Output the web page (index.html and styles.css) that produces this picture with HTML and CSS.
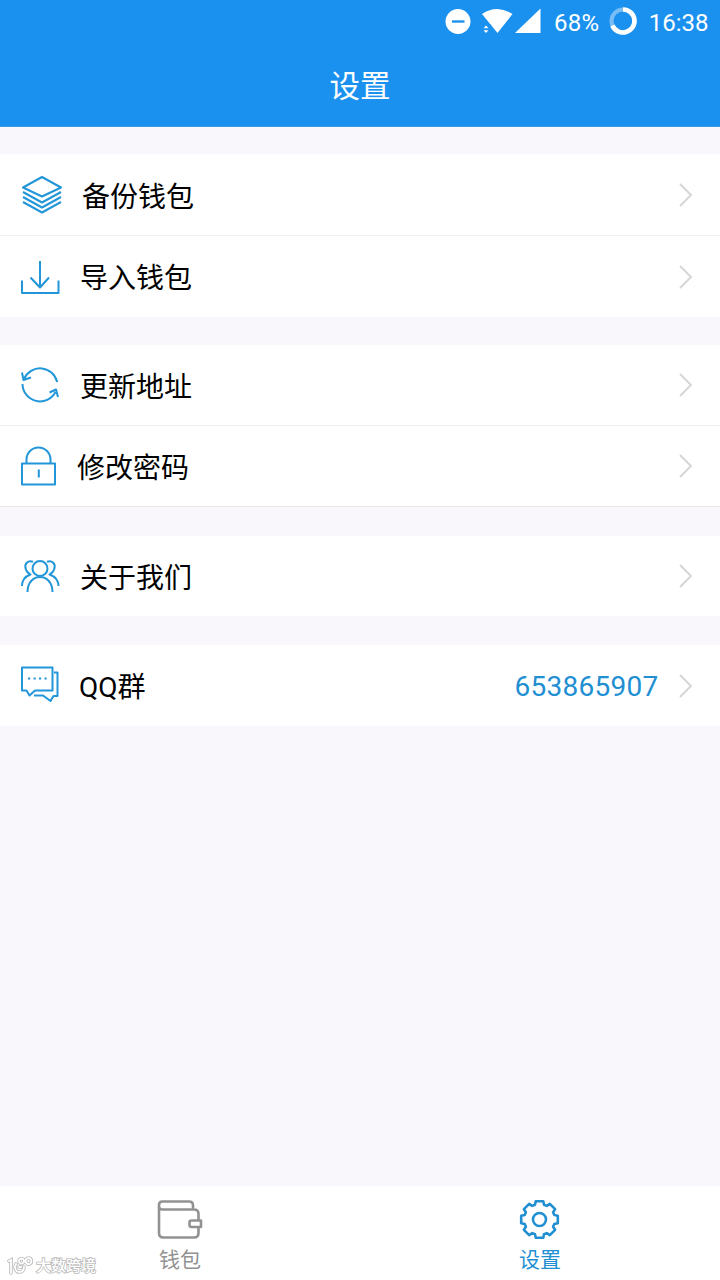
FILE: index.html
```html
<!DOCTYPE html>
<html lang="zh-CN">
<head>
<meta charset="utf-8">
<title>设置</title>
<link rel="stylesheet" href="styles.css">
</head>
<body>
<div class="screen">
  <header class="header">
    <div class="status">
      <svg class="status-icons" viewBox="440 4 104 36" width="104" height="36">
        <circle cx="457" cy="21.500" r="12.500" fill="#fff"/>
        <path d="M451 21.500H463.500" stroke="#1b91ef" stroke-width="2.400"/>
        <path d="M481 14Q496 4 511.500 14L496.500 33Z" fill="#fff"/>
        <path d="M481 24H489.500V34H481Z" fill="#1b91ef"/>
        <path d="M482.500 28.300L485 25.500L487.500 28.300ZM482.500 30.300H487.500L485 33Z" fill="#fff"/>
        <path d="M514 33L539.500 8.500V33Z" fill="#fff"/>
      </svg>
      <span class="battery">68%</span>
      <svg class="ring" viewBox="0 0 30 30" width="30" height="30">
        <circle cx="15" cy="15" r="11.500" fill="none" stroke="#79bdf6" stroke-width="4"/>
        <path d="M15 3.500A11.500 11.500 0 1 1 4.400 19.500" fill="none" stroke="#fff" stroke-width="4.600"/>
      </svg>
      <span class="clock">16:38</span>
    </div>
    <h1 class="title">设置</h1>
  </header>

  <main class="content">
    <section class="group group-backup">
      <div class="row">
        <svg class="icon" viewBox="16 171 48 48"><path d="M23 187.500L42 177L61 187.500L42 196.500ZM23 192L42 202.500L61 192M23 197L42 207.500L61 197M23 202L42 212.500L61 202"/></svg>
        <span class="label label-far">备份钱包</span>
        <svg class="chevron" viewBox="0 0 16 28"><path d="M2 3L13 14L2 25"/></svg>
      </div>
      <div class="row">
        <svg class="icon" viewBox="16 252 48 48"><path d="M22 279.500V292H58.500V279.500M40 260V286M30.500 276.500L40 286.500L49 276.500"/></svg>
        <span class="label">导入钱包</span>
        <svg class="chevron" viewBox="0 0 16 28"><path d="M2 3L13 14L2 25"/></svg>
      </div>
    </section>

    <section class="group group-security">
      <div class="row">
        <svg class="icon" viewBox="16 361 48 48"><path d="M57.200 382A17.500 17.500 0 0 0 24 379M22 372.500L23.500 380L31 377.500M22.500 384A17.500 17.500 0 0 0 55.500 392M49.500 392.500L56 389.500L58 397"/></svg>
        <span class="label">更新地址</span>
        <svg class="chevron" viewBox="0 0 16 28"><path d="M2 3L13 14L2 25"/></svg>
      </div>
      <div class="row">
        <svg class="icon" viewBox="16 442 48 48"><path d="M22 463.500H55V484.500H22ZM26.500 463.500V459.500A12 12 0 0 1 50.500 459.500V463.500M38.800 469.500V477.500"/></svg>
        <span class="label label-near">修改密码</span>
        <svg class="chevron" viewBox="0 0 16 28"><path d="M2 3L13 14L2 25"/></svg>
      </div>
    </section>

    <section class="group group-about">
      <div class="row">
        <svg class="icon" viewBox="16 552 48 48"><circle cx="40" cy="568.500" r="7.500"/><path d="M27.500 592C27.500 572 52.500 572 52.500 592M33 561.800C27.500 560 24.500 564 25.500 568C26 571 28 573 30.500 574.500C25 576.500 22 580 22 586M47 561.800C52.500 560 55.500 564 54.500 568C54 571 52 573 49.500 574.500C55 576.500 58.500 580 58.500 586"/></svg>
        <span class="label">关于我们</span>
        <svg class="chevron" viewBox="0 0 16 28"><path d="M2 3L13 14L2 25"/></svg>
      </div>
    </section>

    <section class="group group-contact">
      <div class="row">
        <svg class="icon" viewBox="16 662 48 48"><path d="M22 667.500H52.500V690.500H35L29.500 695.500L26.500 690.500H22ZM54 672.500H57.500V696H53.500L50.500 701L43 695.500H34"/><path d="M28 678.500H47" stroke-dasharray="2.200 3.300"/></svg>
        <span class="label label-qq">QQ群</span>
        <span class="value">653865907</span>
        <svg class="chevron" viewBox="0 0 16 28"><path d="M2 3L13 14L2 25"/></svg>
      </div>
    </section>
  </main>

  <nav class="tabs">
    <div class="tab">
      <svg class="tab-icon" viewBox="156 1196 48 46"><path d="M159 1209V1205Q159 1201.500 162.500 1201.500H189Q193 1201.500 193 1205.500V1209M159 1206.500Q159 1209.500 162.500 1209.500H194Q198.500 1209.500 198.500 1214V1219.500M198.500 1227.500V1233Q198.500 1237.500 194 1237.500H163.500Q159 1237.500 159 1233V1206M191.500 1220.500H201V1227H191.500Q189.500 1227 189.500 1225V1222.500Q189.500 1220.500 191.500 1220.500Z"/></svg>
      <span class="tab-label">钱包</span>
    </div>
    <div class="tab tab-active">
      <svg class="tab-icon" viewBox="-23.500 -23.500 48 46"><circle r="6.500"/><path d="M-4.500-14.800L-3.800-18.300H3.800L4.500-14.800L7.300-13.600L10.300-15.600L15.600-10.300L13.600-7.300L14.800-4.500L18.300-3.800V3.800L14.800 4.500L13.600 7.300L15.600 10.300L10.300 15.600L7.300 13.600L4.500 14.800L3.800 18.300H-3.800L-4.500 14.800L-7.300 13.600L-10.300 15.600L-15.600 10.300L-13.600 7.300L-14.800 4.500L-18.300 3.800V-3.800L-14.800-4.500L-13.600-7.300L-15.600-10.300L-10.300-15.600L-7.300-13.600Z"/></svg>
      <span class="tab-label">设置</span>
    </div>
    <div class="watermark">
      <svg class="watermark-logo" viewBox="0 0 28 20" width="28" height="20">
        <defs><path id="mark" d="M2 5L4 4V17M9 8C7 12 9 16 12 16C15 16 17 14 17 11M12 11H14M17 5A2.500 2.500 0 1 0 17 5.100M24.500 5A3 3 0 1 0 24.500 5.100"/></defs>
        <use href="#mark" class="mark-edge"/>
        <use href="#mark" class="mark-core"/>
      </svg>
      <span class="watermark-text">大数跨境</span>
    </div>
  </nav>
</div>
</body>
</html>
```
FILE: styles.css
```css
* { box-sizing: border-box; }
body {
  margin: 0;
  font-family: Roboto, "Noto Sans CJK SC", sans-serif;
  color: #000;
}
.screen {
  width: 720px;
  height: 1280px;
  display: flex;
  flex-direction: column;
  background: #faf7fc;
  overflow: hidden;
}
.header {
  height: 127px;
  background: #1b91ef;
  border-bottom: 1px solid #3c9be6;
  color: #fff;
}
.status {
  height: 44px;
  padding-right: 11.5px;
  display: flex;
  justify-content: flex-end;
  align-items: center;
  font-size: 24px;
  line-height: 44px;
}
.battery,
.clock { padding-top: 1px; }
.battery { margin-left: 9.5px; }
.ring { margin: 0 11px 2px 8.5px; }
.battery { letter-spacing: 0.2px; }
.title {
  margin: 0;
  font-size: 30.5px;
  font-weight: 400;
  line-height: 86px;
  text-align: center;
}
.content {
  flex: 1;
  padding-top: 27px;
}
.group {
  background: #fff;
  display: flex;
  flex-direction: column;
}
.group-backup { height: 163px; }
.group-security { height: 162px; margin-top: 28px; border-bottom: 1px solid #e6e5e8; }
.group-about { height: 80px; margin-top: 29px; }
.group-contact { height: 81px; margin-top: 29px; }
.row {
  flex: 1;
  display: flex;
  align-items: center;
  padding: 0 26px 0 16px;
}
.row + .row { border-top: 1px solid #f0f0f2; }
.icon {
  width: 48px;
  height: 48px;
  fill: none;
  stroke: #2296d9;
  stroke-width: 2;
  stroke-linejoin: round;
}
.label {
  margin-left: 16px;
  padding-top: 5px;
  font-size: 28px;
  line-height: 40px;
}
.label-far { margin-left: 18px; padding-top: 7px; }
.label-near { margin-left: 13px; }
.label-qq { margin-left: 15px; padding-top: 4px; }
.chevron {
  width: 16px;
  height: 28px;
  margin-left: auto;
  fill: none;
  stroke: #d6d6d8;
  stroke-width: 2;
}
.value {
  margin-left: auto;
  margin-right: 19.5px;
  padding-top: 2px;
  font-size: 28px;
  letter-spacing: 0.25px;
  color: #218fd2;
}
.value + .chevron { margin-left: 0; }
.tabs {
  position: relative;
  height: 94px;
  display: flex;
  background: #fff;
}
.tab {
  flex: 1;
  display: flex;
  flex-direction: column;
  align-items: center;
  padding-top: 10px;
  color: #929292;
}
.tab-active { color: #218fd2; }
.tab-icon {
  width: 48px;
  height: 46px;
  fill: none;
  stroke: currentColor;
  stroke-width: 2.6;
  stroke-linejoin: round;
}
.tab-label {
  font-size: 21px;
  line-height: 36px;
}
.watermark {
  position: absolute;
  left: 7px;
  bottom: 2px;
  display: flex;
  align-items: center;
  gap: 1px;
}
.watermark-logo {
  fill: none;
  stroke-linecap: round;
}
.mark-edge {
  stroke: #bdbdbd;
  stroke-width: 3.6;
}
.mark-core {
  stroke: #fff;
  stroke-width: 1.8;
}
.watermark-text {
  font-size: 15px;
  font-weight: 500;
  line-height: 24px;
  color: #fff;
  -webkit-text-stroke: 1.6px #b8b8b8;
  paint-order: stroke fill;
}
```
